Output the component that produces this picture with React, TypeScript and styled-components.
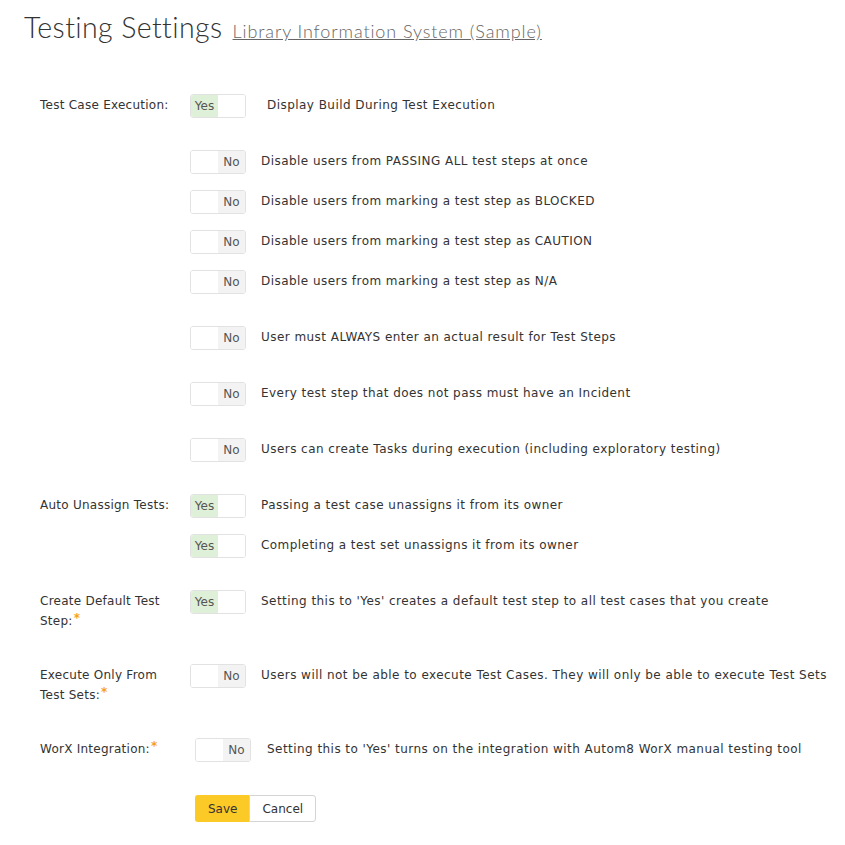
import React from 'react'
import styled, { createGlobalStyle } from 'styled-components'

const GlobalStyle = createGlobalStyle`
  body {
    margin: 0;
    background: #fff;
    font-family: 'DejaVu Sans', sans-serif;
    color: #333;
  }
`

const Page = styled.div`
  padding: 10px 24px 24px 24px;
  width: 845px;
  box-sizing: border-box;
`

const Header = styled.div`
  display: flex;
  align-items: baseline;
  gap: 10px;
`

const Title = styled.h1`
  margin: 0;
  font-family: 'Lato', sans-serif;
  font-weight: 300;
  font-size: 28.5px;
  color: #333;
  letter-spacing: 0.4px;
`

const ProjectLink = styled.a`
  font-family: 'Lato', sans-serif;
  font-weight: 300;
  font-size: 18px;
  color: #666;
  text-decoration: underline;
  letter-spacing: 0.9px;
`

const Form = styled.div`
  padding-left: 16px;
  margin-top: 50px;
`

const Section = styled.div<{ $top: number }>`
  display: grid;
  grid-template-columns: 150px 1fr;
  margin-top: ${p => p.$top}px;
`

const Label = styled.div`
  font-size: 12px;
  line-height: 20px;
  padding-top: 1px;
  width: 132px;
  color: #333;
  letter-spacing: 0.25px;
`

const Req = styled.span`
  display: inline-block;
  color: #f6a019;
  font-size: 12px;
  font-weight: bold;
  line-height: 10px;
  margin-left: 1px;
  vertical-align: top;
  position: relative;
  top: 2px;
`

const Options = styled.div`
  display: flex;
  flex-direction: column;
`

const Option = styled.div<{ $top: number; $indent?: number }>`
  display: flex;
  align-items: center;
  margin-top: ${p => p.$top}px;
  padding-left: ${p => p.$indent || 0}px;
  height: 24px;
`

const Toggle = styled.div`
  display: flex;
  width: 56px;
  height: 24px;
  box-sizing: border-box;
  border: 1px solid #e2e2e2;
  border-radius: 3px;
  overflow: hidden;
  flex-shrink: 0;
`

const Half = styled.div<{ $on: boolean; $tone: 'yes' | 'no' }>`
  flex: 1;
  display: flex;
  align-items: center;
  justify-content: center;
  font-size: 12px;
  color: #555;
  background: ${p => (p.$on ? (p.$tone === 'yes' ? '#dff0d8' : '#f3f3f3') : '#fff')};
`

const Desc = styled.div<{ $gap: number }>`
  margin-left: ${p => p.$gap}px;
  font-size: 12px;
  color: #333;
  white-space: nowrap;
  letter-spacing: 0.45px;
  position: relative;
  top: -1px;
`

const Buttons = styled.div`
  display: flex;
  margin-top: 33px;
  margin-left: 155px;
`

const Button = styled.button<{ $primary?: boolean }>`
  height: 27px;
  padding: 0 12px;
  font-family: 'DejaVu Sans', sans-serif;
  font-size: 12px;
  color: #333;
  background: ${p => (p.$primary ? '#fcca26' : '#fff')};
  border: 1px solid ${p => (p.$primary ? '#fcca26' : '#d4d4d4')};
  border-radius: ${p => (p.$primary ? '3px 0 0 3px' : '0 3px 3px 0')};
  ${p => (p.$primary ? 'border-right: none;' : '')}
  cursor: pointer;
`

type Opt = { yes: boolean; text: string; top: number; gap?: number; indent?: number }

const Switch: React.FC<{ yes: boolean }> = ({ yes }) => (
  <Toggle>
    <Half $on={yes} $tone="yes">{yes ? 'Yes' : ''}</Half>
    <Half $on={!yes} $tone="no">{yes ? '' : 'No'}</Half>
  </Toggle>
)

const Setting: React.FC<{ top: number; label: React.ReactNode; options: Opt[] }> = ({ top, label, options }) => (
  <Section $top={top}>
    <Label>{label}</Label>
    <Options>
      {options.map((o, i) => (
        <Option key={i} $top={o.top} $indent={o.indent}>
          <Switch yes={o.yes} />
          <Desc $gap={o.gap ?? 15}>{o.text}</Desc>
        </Option>
      ))}
    </Options>
  </Section>
)

const App: React.FC = () => {
  return (
    <>
      <GlobalStyle />
      <Page>
        <Header>
          <Title>Testing Settings</Title>
          <ProjectLink href="#">Library Information System (Sample)</ProjectLink>
        </Header>
        <Form>
          <Setting
            top={0}
            label="Test Case Execution:"
            options={[
              { yes: true, text: 'Display Build During Test Execution', top: 0, gap: 21 },
              { yes: false, text: 'Disable users from PASSING ALL test steps at once', top: 32 },
              { yes: false, text: 'Disable users from marking a test step as BLOCKED', top: 16 },
              { yes: false, text: 'Disable users from marking a test step as CAUTION', top: 16 },
              { yes: false, text: 'Disable users from marking a test step as N/A', top: 16 },
              { yes: false, text: 'User must ALWAYS enter an actual result for Test Steps', top: 32 },
              { yes: false, text: 'Every test step that does not pass must have an Incident', top: 32 },
              { yes: false, text: 'Users can create Tasks during execution (including exploratory testing)', top: 32 },
            ]}
          />
          <Setting
            top={32}
            label="Auto Unassign Tests:"
            options={[
              { yes: true, text: 'Passing a test case unassigns it from its owner', top: 0 },
              { yes: true, text: 'Completing a test set unassigns it from its owner', top: 16 },
            ]}
          />
          <Setting
            top={32}
            label={<>Create Default Test Step:<Req>*</Req></>}
            options={[
              { yes: true, text: "Setting this to 'Yes' creates a default test step to all test cases that you create", top: 0 },
            ]}
          />
          <Setting
            top={33}
            label={<>Execute Only From Test Sets:<Req>*</Req></>}
            options={[
              { yes: false, text: 'Users will not be able to execute Test Cases. They will only be able to execute Test Sets', top: 0 },
            ]}
          />
          <Setting
            top={33}
            label={<>WorX Integration:<Req>*</Req></>}
            options={[
              { yes: false, text: "Setting this to 'Yes' turns on the integration with Autom8 WorX manual testing tool", top: 0, gap: 16, indent: 5 },
            ]}
          />
          <Buttons>
            <Button $primary>Save</Button>
            <Button>Cancel</Button>
          </Buttons>
        </Form>
      </Page>
    </>
  )
}

export default App
